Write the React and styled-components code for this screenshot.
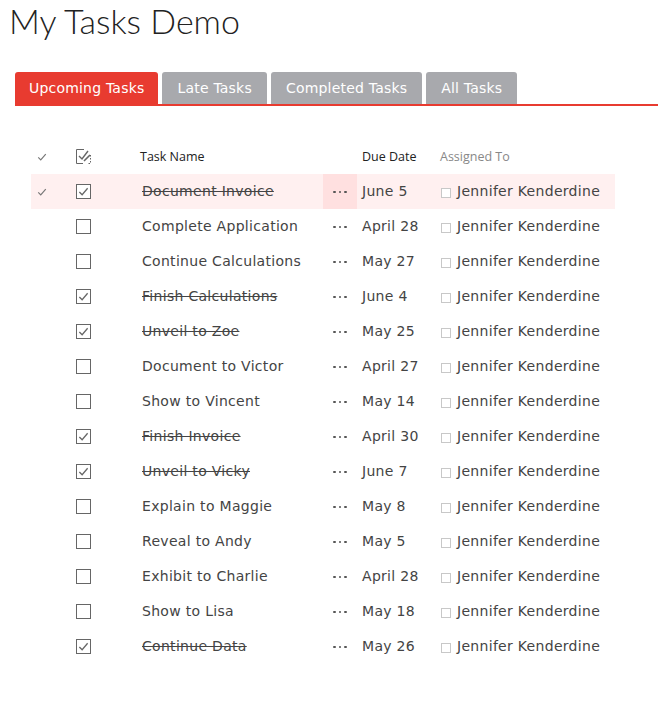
import React from 'react';
import styled, { createGlobalStyle } from 'styled-components';

const GlobalStyle = createGlobalStyle`
  body {
    margin: 0;
    background: #fff;
    font-family: "DejaVu Sans", Verdana, sans-serif;
  }
`;

const Page = styled.div`
  width: 658px;
`;

const Title = styled.h1`
  margin: 0 0 0 9px;
  font-family: Lato, "Segoe UI", sans-serif;
  font-weight: 300;
  font-size: 34px;
  line-height: 42px;
  color: #222;
`;

const TabBar = styled.div`
  display: flex;
  gap: 4px;
  margin: 30px 0 0 15px;
  border-bottom: 2px solid #e83b30;
`;

const Tab = styled.div`
  height: 32px;
  display: flex;
  align-items: center;
  padding: 0 ${(p) => (p.$active ? 14 : 15)}px;
  border-radius: 3px 3px 0 0;
  background: ${(p) => (p.$active ? '#e83b30' : '#a8a9ad')};
  color: #fff;
  font-size: 14px;
  letter-spacing: 0.2px;
  box-sizing: border-box;
`;

const Table = styled.div`
  margin: 33px 0 0 31px;
  width: 584px;
`;

const Row = styled.div`
  display: grid;
  grid-template-columns: 22px 60px 210px 34px 78px 1fr;
  height: 35px;
  align-items: stretch;
  background: ${(p) => (p.$selected ? '#fff0f0' : 'transparent')};
`;

const Cell = styled.div`
  display: flex;
  align-items: center;
  justify-content: ${(p) => (p.$center ? 'center' : 'flex-start')};
  padding-left: ${(p) => p.$pl || 0}px;
  background: ${(p) => (p.$shade ? '#ffe0e0' : 'transparent')};
  overflow: hidden;
  white-space: nowrap;
`;

const HeadText = styled.span`
  font-family: "Open Sans", "Segoe UI", sans-serif;
  font-size: 12.5px;
  color: ${(p) => (p.$muted ? '#888' : '#222')};
`;

const CellText = styled.span`
  display: inline-block;
  padding-bottom: 2px;
  font-size: 14px;
  color: #444;
  letter-spacing: 0.3px;
  text-decoration: ${(p) => (p.$done ? 'line-through' : 'none')};
`;

const Box = styled.span`
  width: 15px;
  height: 15px;
  box-sizing: border-box;
  border: 1px solid #666;
  display: flex;
  align-items: center;
  justify-content: center;
  background: #fff;
`;

const SmallBox = styled.span`
  width: 10px;
  height: 10px;
  box-sizing: border-box;
  border: 1px solid #c8c8c8;
  margin-right: 6px;
  margin-top: 2px;
  background: #fff;
`;

const Dots = styled.span`
  display: flex;
  gap: 3px;
  margin-top: 1px;
  span {
    width: 2.5px;
    height: 2.5px;
    border-radius: 50%;
    background: #555;
  }
`;

const Tick = ({ size = 11, color = '#666' }) => (
  <svg width={size} height={size} viewBox="0 0 12 12">
    <path d="M1.5 6.5 L4.5 9.5 L10.5 2.5" fill="none" stroke={color} strokeWidth="1.4" />
  </svg>
);

const Check = ({ done }) => (
  <Box>{done && <Tick size={11} />}</Box>
);

const HeaderCheck = () => (
  <svg width="17" height="17" viewBox="0 0 17 17">
    <path d="M9 1.5 H1.5 V15.5 H8" fill="none" stroke="#666" strokeWidth="1" />
    <path d="M15.5 7 V15.5 H13" fill="none" stroke="#666" strokeWidth="1" strokeDasharray="1.5 1.5" />
    <path d="M4 8 L7 11 L13 3" fill="none" stroke="#666" strokeWidth="1.4" />
    <path d="M9 13 L15 7" fill="none" stroke="#666" strokeWidth="1.6" />
  </svg>
);

const tasks = [
  { name: 'Document Invoice', due: 'June 5', done: true, selected: true },
  { name: 'Complete Application', due: 'April 28' },
  { name: 'Continue Calculations', due: 'May 27' },
  { name: 'Finish Calculations', due: 'June 4', done: true },
  { name: 'Unveil to Zoe', due: 'May 25', done: true },
  { name: 'Document to Victor', due: 'April 27' },
  { name: 'Show to Vincent', due: 'May 14' },
  { name: 'Finish Invoice', due: 'April 30', done: true },
  { name: 'Unveil to Vicky', due: 'June 7', done: true },
  { name: 'Explain to Maggie', due: 'May 8' },
  { name: 'Reveal to Andy', due: 'May 5' },
  { name: 'Exhibit to Charlie', due: 'April 28' },
  { name: 'Show to Lisa', due: 'May 18' },
  { name: 'Continue Data', due: 'May 26', done: true },
];

const tabs = ['Upcoming Tasks', 'Late Tasks', 'Completed Tasks', 'All Tasks'];

export default function App() {
  return (
    <Page>
      <GlobalStyle />
      <Title>My Tasks Demo</Title>
      <TabBar>
        {tabs.map((t, i) => (
          <Tab key={t} $active={i === 0}>{t}</Tab>
        ))}
      </TabBar>
      <Table>
        <Row>
          <Cell $center><Tick size={10} color="#777" /></Cell>
          <Cell $center><HeaderCheck /></Cell>
          <Cell $pl={27}><HeadText>Task Name</HeadText></Cell>
          <Cell />
          <Cell $pl={5}><HeadText>Due Date</HeadText></Cell>
          <Cell $pl={5}><HeadText $muted>Assigned To</HeadText></Cell>
        </Row>
        {tasks.map((t) => (
          <Row key={t.name} $selected={t.selected}>
            <Cell $center>{t.selected && <Tick size={10} color="#777" />}</Cell>
            <Cell $center><Check done={t.done} /></Cell>
            <Cell $pl={29}><CellText $done={t.done}>{t.name}</CellText></Cell>
            <Cell $center $shade={t.selected}><Dots><span /><span /><span /></Dots></Cell>
            <Cell $pl={5}><CellText>{t.due}</CellText></Cell>
            <Cell $pl={6}><SmallBox /><CellText>Jennifer Kenderdine</CellText></Cell>
          </Row>
        ))}
      </Table>
    </Page>
  );
}
